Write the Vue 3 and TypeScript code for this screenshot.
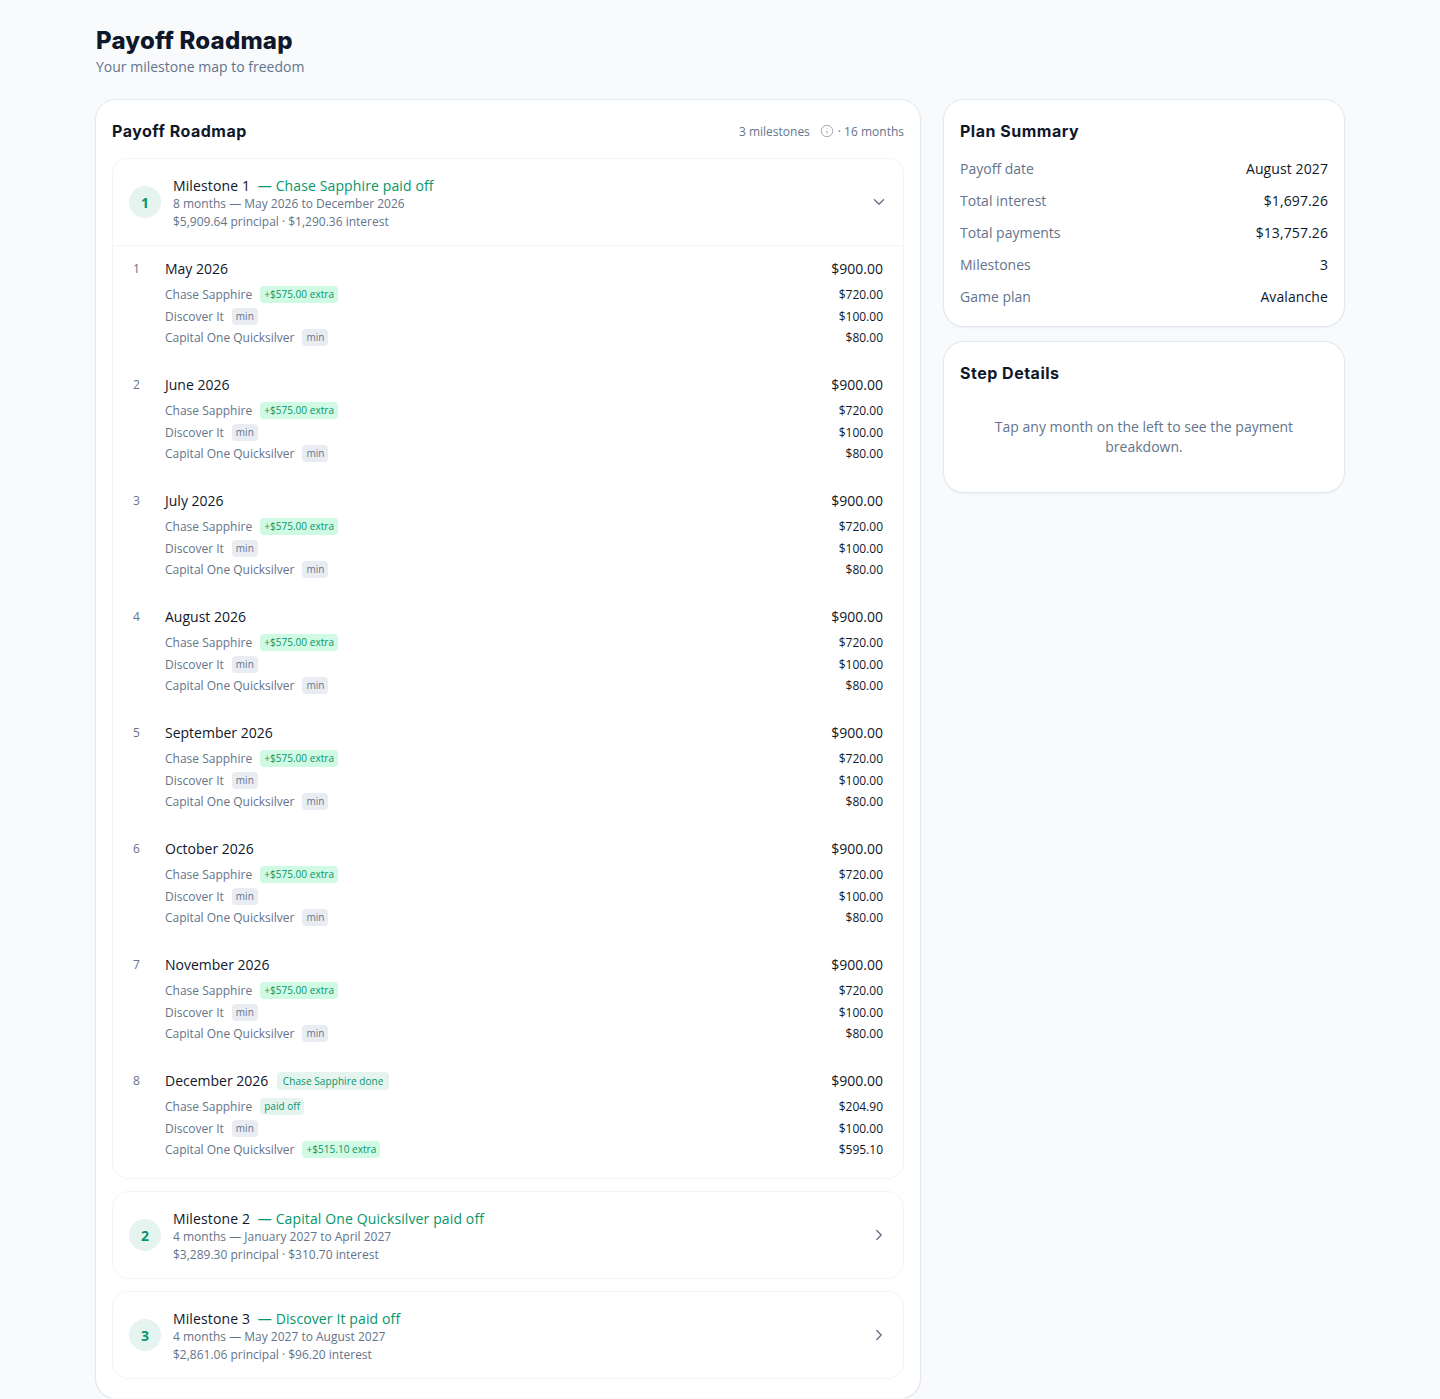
<script setup lang="ts">
interface Line { name: string; amount: string; tag: string; kind: 'extra' | 'min' | 'paid' }
interface Step { n: number; month: string; done?: string; lines: Line[] }

const normal = (): Line[] => [
  { name: 'Chase Sapphire', amount: '$720.00', tag: '+$575.00 extra', kind: 'extra' },
  { name: 'Discover It', amount: '$100.00', tag: 'min', kind: 'min' },
  { name: 'Capital One Quicksilver', amount: '$80.00', tag: 'min', kind: 'min' },
]
const months = ['May 2026', 'June 2026', 'July 2026', 'August 2026', 'September 2026', 'October 2026', 'November 2026']
const steps: Step[] = months.map((month, i) => ({ n: i + 1, month, lines: normal() }))
steps.push({
  n: 8,
  month: 'December 2026',
  done: 'Chase Sapphire done',
  lines: [
    { name: 'Chase Sapphire', amount: '$204.90', tag: 'paid off', kind: 'paid' },
    { name: 'Discover It', amount: '$100.00', tag: 'min', kind: 'min' },
    { name: 'Capital One Quicksilver', amount: '$595.10', tag: '+$515.10 extra', kind: 'extra' },
  ],
})

const collapsed = [
  { n: 2, paid: 'Capital One Quicksilver paid off', range: '4 months — January 2027 to April 2027', money: '$3,289.30 principal · $310.70 interest' },
  { n: 3, paid: 'Discover It paid off', range: '4 months — May 2027 to August 2027', money: '$2,861.06 principal · $96.20 interest' },
]
const summary = [
  ['Payoff date', 'August 2027'],
  ['Total interest', '$1,697.26'],
  ['Total payments', '$13,757.26'],
  ['Milestones', '3'],
  ['Game plan', 'Avalanche'],
]
</script>

<template>
  <div class="page">
    <header class="head">
      <h1>Payoff Roadmap</h1>
      <p>Your milestone map to freedom</p>
    </header>
    <div class="layout">
      <section class="card main">
        <div class="card-head">
          <h2>Payoff Roadmap</h2>
          <div class="meta">
            <span>3 milestones</span>
            <svg class="info" viewBox="0 0 14 14" width="14" height="14" fill="none" stroke="#a3aebd" stroke-width="1">
              <circle cx="7" cy="7" r="5.7" />
              <path d="M7 6.4v3.2M7 4.2v.8" />
            </svg>
            <span>· 16 months</span>
          </div>
        </div>

        <div class="milestone">
          <div class="ms-head open">
            <div class="badge">1</div>
            <div class="ms-text">
              <div class="ms-title">Milestone 1 <span class="paid">— Chase Sapphire paid off</span></div>
              <div class="ms-sub">8 months — May 2026 to December 2026</div>
              <div class="ms-sub">$5,909.64 principal · $1,290.36 interest</div>
            </div>
            <svg class="chev" viewBox="0 0 16 16" width="16" height="16" fill="none" stroke="#64748b" stroke-width="1.4" stroke-linecap="round" stroke-linejoin="round">
              <path d="M3.5 5.8L8 10.2l4.5-4.4" />
            </svg>
          </div>
          <div class="steps">
            <div v-for="s in steps" :key="s.n" class="step">
              <div class="step-num">{{ s.n }}</div>
              <div class="step-body">
                <div class="step-top">
                  <span class="month">{{ s.month }}</span>
                  <span v-if="s.done" class="pill done">{{ s.done }}</span>
                  <span class="total">$900.00</span>
                </div>
                <div class="lines">
                  <div v-for="l in s.lines" :key="l.name" class="line">
                    <span class="name">{{ l.name }}</span>
                    <span class="pill" :class="l.kind">{{ l.tag }}</span>
                    <span class="amount">{{ l.amount }}</span>
                  </div>
                </div>
              </div>
            </div>
          </div>
        </div>

        <div v-for="m in collapsed" :key="m.n" class="milestone">
          <div class="ms-head">
            <div class="badge">{{ m.n }}</div>
            <div class="ms-text">
              <div class="ms-title">Milestone {{ m.n }} <span class="paid">— {{ m.paid }}</span></div>
              <div class="ms-sub">{{ m.range }}</div>
              <div class="ms-sub">{{ m.money }}</div>
            </div>
            <svg class="chev" viewBox="0 0 16 16" width="16" height="16" fill="none" stroke="#64748b" stroke-width="1.4" stroke-linecap="round" stroke-linejoin="round">
              <path d="M5.8 3.5L10.2 8l-4.4 4.5" />
            </svg>
          </div>
        </div>
      </section>

      <aside class="side">
        <section class="card summary">
          <h2>Plan Summary</h2>
          <div class="rows">
            <div v-for="r in summary" :key="r[0]" class="row">
              <span class="label">{{ r[0] }}</span>
              <span class="value">{{ r[1] }}</span>
            </div>
          </div>
        </section>
        <section class="card details">
          <h2>Step Details</h2>
          <p>Tap any month on the left to see the payment breakdown.</p>
        </section>
      </aside>
    </div>
  </div>
</template>

<style>
html, body { margin: 0; background: #f8fafc; }
</style>

<style scoped>
.page {
  box-sizing: border-box;
  width: 1440px;
  padding: 24px 96px 0;
  font-family: "Open Sans", "Noto Sans", sans-serif;
  color: #0f172a;
  background: #f8fafc;
}
h1, h2, p { margin: 0; }
h1 {
  font-family: Inter, sans-serif;
  font-size: 24px;
  line-height: 31px;
  padding-top: 1px;
  font-weight: 800;
  letter-spacing: 0.2px;
}
.head p { font-size: 14px; line-height: 22px; color: #64748b; }
.head { margin-bottom: 22px; }
.layout { display: grid; grid-template-columns: 1fr 400px; gap: 24px; align-items: start; }
.card {
  box-sizing: border-box;
  background: #fff;
  border-radius: 20px;
  box-shadow: 0 0 0 1px #e2e8f0, 0 1px 3px rgba(15, 23, 42, 0.1);
}
h2 {
  font-family: Inter, sans-serif;
  font-size: 16px;
  line-height: 24px;
  font-weight: 700;
  letter-spacing: 0.5px;
}
.main { padding: 19px 16px 19px; }
.card-head { display: flex; justify-content: space-between; align-items: center; margin-bottom: 15px; }
.meta { display: flex; align-items: center; font-size: 12px; color: #64748b; }
.info { margin: 0 4px 0 10px; }
.milestone { border: 1px solid #f1f5f9; border-radius: 16px; margin-bottom: 12px; overflow: hidden; }
.milestone:last-child { margin-bottom: 0; }
.ms-head { display: flex; align-items: center; height: 86px; padding: 0 16px; }
.ms-head.open { border-bottom: 1px solid #f1f5f9; }
.badge {
  width: 32px; height: 32px; border-radius: 50%;
  background: #e6f4ef; color: #059669;
  font-size: 14px; font-weight: 700;
  display: flex; align-items: center; justify-content: center;
  flex: none; margin-right: 12px;
}
.ms-text { flex: 1; padding-top: 4px; }
.ms-title { font-size: 14px; line-height: 18px; white-space: pre-wrap; letter-spacing: 0.12px; }
.paid { color: #059669; margin-left: 4px; }
.ms-sub { font-size: 12px; line-height: 18px; color: #64748b; }
.chev { flex: none; }
.steps { padding-bottom: 4px; }
.step { display: flex; padding: 12px 20px 15.5px; }
.step-num { width: 32px; font-size: 12px; line-height: 22px; color: #64748b; flex: none; }
.step-body { flex: 1; }
.step-top { display: flex; align-items: center; height: 21px; font-size: 14px; margin-bottom: 7px; }
.total, .amount { margin-left: auto; }
.lines { display: flex; flex-direction: column; gap: 4px; }
.line { display: flex; align-items: center; height: 17.5px; font-size: 12px; }
.name { color: #64748b; }
.pill {
  font-size: 10px; line-height: 14px;
  padding: 1px 4px 2px; border-radius: 4px;
  margin-left: 8px; letter-spacing: 0.04px;
}
.extra { background: #d1fae5; color: #059669; }
.pill.paid { background: #e6f4ef; color: #059669; margin-left: 8px; }
.min { background: #e9edf3; color: #64748b; }
.pill.done { background: #e6f4ef; color: #059669; padding: 2px 6px; margin-left: 8.5px; letter-spacing: 0.08px; }
.side { display: flex; flex-direction: column; gap: 16px; }
.summary { padding: 19px 16px 14px; }
.rows { margin-top: 9px; }
.row { display: flex; justify-content: space-between; align-items: center; height: 32px; font-size: 14px; }
.label { color: #64748b; }
.value { letter-spacing: 0.1px; }
.details { padding: 19px 16px 35px; }
.details p { padding: 32px 24px 0; text-align: center; font-size: 14px; line-height: 20px; color: #64748b; }
</style>
